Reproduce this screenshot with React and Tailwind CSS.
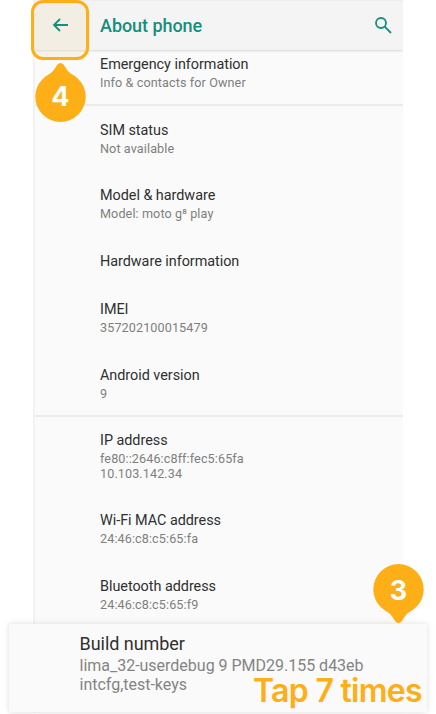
import React from "react";

function Row({ title, lines = [], className = "h-[65px]" }) {
  return (
    <div className={`${className} shrink-0 pt-[15px] pl-[66px]`}>
      <div className="h-5 text-[14.4px] leading-5 tracking-[-0.03px] whitespace-nowrap text-[#303030]">{title}</div>
      {lines.map((line) => (
        <div key={line} className="h-[15px] text-[12.6px] leading-[15px] tracking-[0.11px] whitespace-nowrap text-[#7f7f7f]">
          {line}
        </div>
      ))}
    </div>
  );
}

function Badge({ label, down = false, className }) {
  return (
    <div className={`absolute flex h-[59px] w-[51px] justify-center ${down ? "items-start pt-px" : "items-end"} ${className}`}>
      <svg viewBox="0 0 51 59" className={`absolute inset-0 h-full w-full ${down ? "rotate-180" : ""}`} fill="#feae17">
        <circle cx="25.5" cy="33.7" r="25.2" />
        <path d="M13 12C18 9.500 20 5 22.500 1.500Q25.500 -1.500 28.500 1.500C31 5 33 9.500 38 12Z" />
      </svg>
      <span className="relative flex h-[51px] items-center font-['Inter',sans-serif] text-[27px] leading-none font-bold text-white">
        {label}
      </span>
    </div>
  );
}

export default function App() {
  return (
    <div className="relative flex h-[714px] w-[436px] flex-col overflow-hidden bg-white font-['Roboto',sans-serif]">
      <main className="ml-[33px] flex h-[713px] w-[370px] shrink-0 flex-col overflow-hidden border-l-2 border-[#f2f2f2] bg-[#fafafa]">
        <header className="relative flex h-[50px] shrink-0 items-center justify-between border-t border-[#eeeeee] bg-[#f4f4f4] pr-[11px] pl-[65px] shadow-[0_1px_2px_#d8d8d8]">
          <h1 className="text-[18px] leading-6 font-medium tracking-[-0.06px] whitespace-nowrap text-[#148e7d]">About phone</h1>
          <svg viewBox="0 0 18 18" className="mb-0.5 size-[18px]" fill="none" stroke="#148e7d" strokeWidth="1.8">
            <circle cx="7" cy="7" r="5" />
            <path d="M10.700 10.700L17 17" />
          </svg>
        </header>
        <div className="-ml-px flex flex-col">
          <Row title="Emergency information" lines={["Info & contacts for Owner"]} className="-mt-[10px] h-[66px] border-b-2 border-[#ebebeb]" />
          <Row title="SIM status" lines={["Not available"]} />
          <Row title={"Model & hardware"} lines={["Model: moto g⁸ play"]} className="h-[66px]" />
          <Row title="Hardware information" className="h-12" />
          <Row title="IMEI" lines={["357202100015479"]} className="h-[66px]" />
          <Row title="Android version" lines={["9"]} className="h-[66px] border-b-2 border-[#ebebeb]" />
          <Row title="IP address" lines={["fe80::2646:c8ff:fec5:65fa", "10.103.142.34"]} className="-mt-px h-20" />
          <Row title="Wi-Fi MAC address" lines={["24:46:c8:c5:65:fa"]} className="h-[66px]" />
          <Row title="Bluetooth address" lines={["24:46:c8:c5:65:f9"]} />
        </div>
      </main>

      <section className="absolute top-[624px] left-[9px] h-[88px] w-[418px] bg-[#fafafa] pt-2 pl-[70.5px] shadow-[0_0_6px_#dedede]">
        <h2 className="text-[18px] leading-6 tracking-[-0.04px] whitespace-nowrap text-[#303030]">Build number</h2>
        <p className="text-[16px] leading-[19px] tracking-[-0.01px] whitespace-nowrap text-[#848484]">
          lima_32-userdebug 9 PMD29.155 d43eb
          <br />
          intcfg,test-keys
        </p>
        <strong className="absolute top-[51px] left-[244px] font-['Inter',sans-serif] text-[32px] leading-8 font-semibold tracking-[-0.7px] whitespace-nowrap text-[#feae17]">
          Tap 7 times
        </strong>
      </section>

      <div className="absolute top-0 left-[31px] flex h-[60px] w-[58px] items-center justify-center rounded-[12px] border-[3px] border-[#feae17] bg-[#eedcae]/25">
        <svg viewBox="0 0 16 14" className="mr-px mb-2.5 h-[14px] w-4" fill="none" stroke="#148e7d" strokeWidth="1.8">
          <path d="M16 7H2M8 1L2 7L8 13" />
        </svg>
      </div>
      <Badge label="4" className="top-[63px] left-[35px]" />
      <Badge label="3" down className="top-[564px] left-[373px]" />
    </div>
  );
}
